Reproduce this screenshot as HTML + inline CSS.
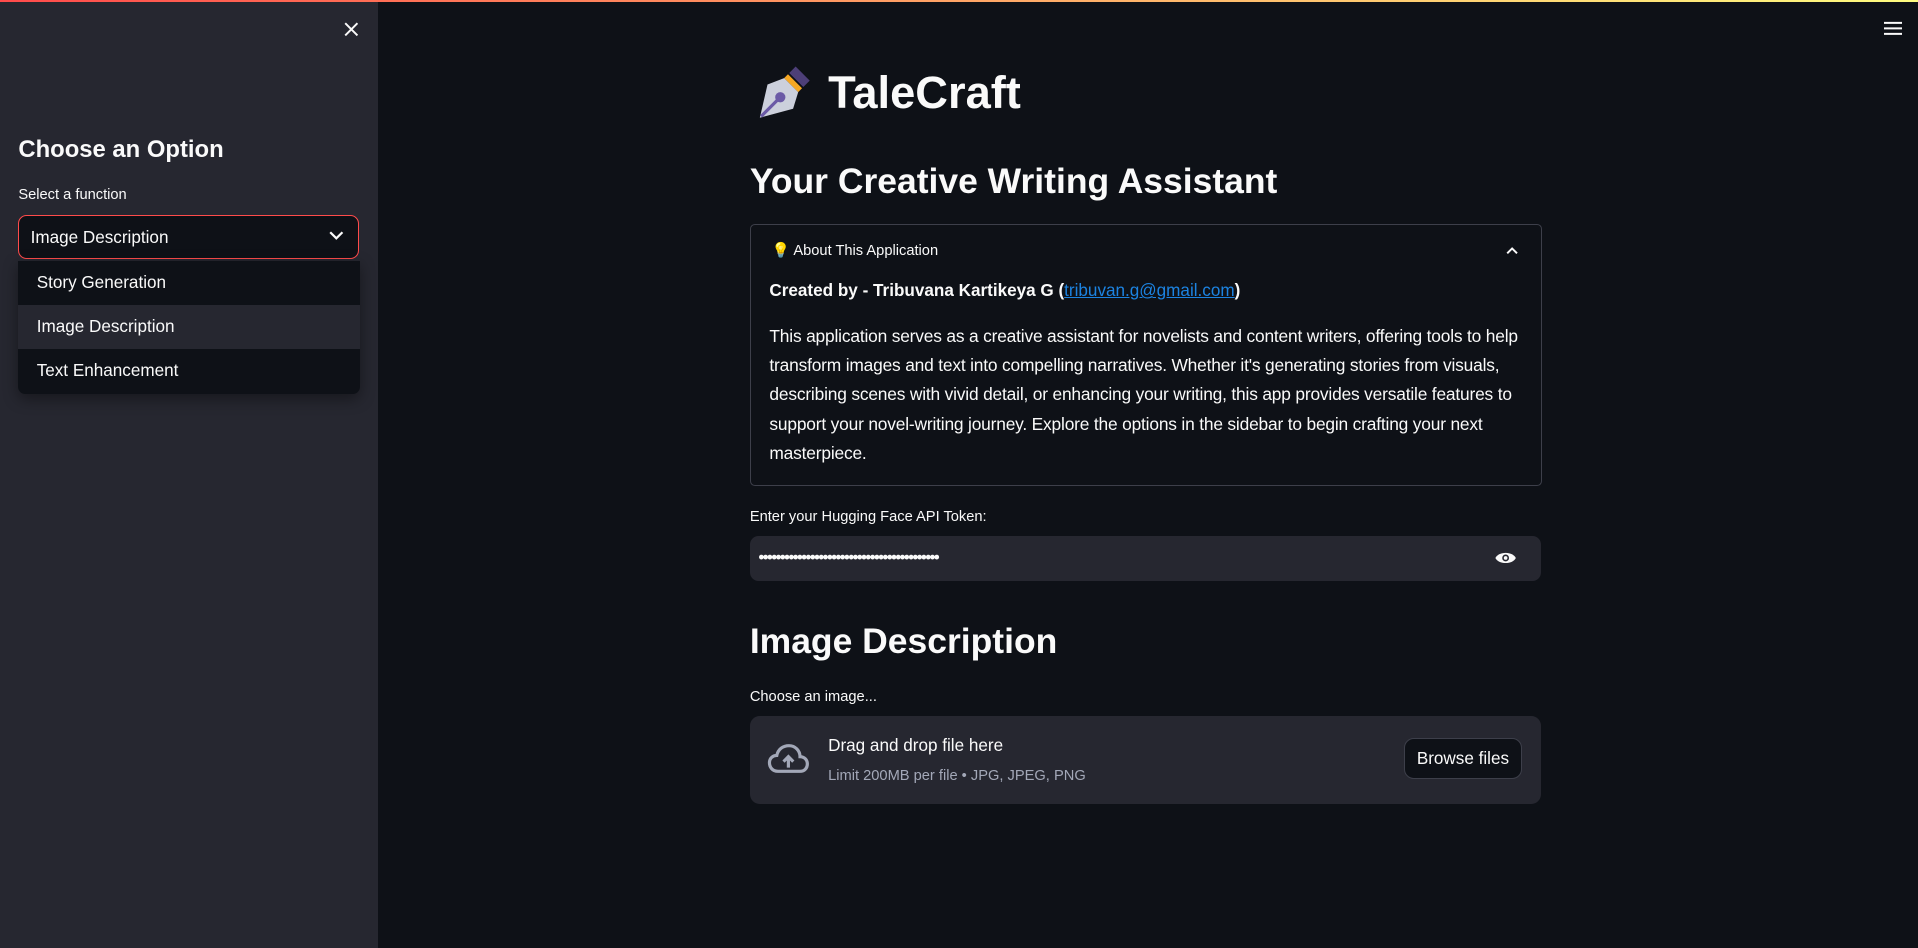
<!DOCTYPE html>
<html><head><meta charset="utf-8"><style>
html,body{margin:0;padding:0;background:#0e1117;overflow:hidden}
body{width:1918px;height:948px}
#root{zoom:1.2232;width:1568px;height:775px;position:relative;font-family:"Liberation Sans",sans-serif;color:#fafafa;background:#0e1117}
.abs{position:absolute}
.bar{left:0;top:0;width:1568px;height:2px;background:linear-gradient(90deg,#ff4b4b,#fffd80)}
.side{left:0;top:2px;width:309px;height:773px;background:#262730}
.t{white-space:nowrap}
</style></head><body><div id="root">
<div class="abs side"></div>
<div class="abs bar"></div>
<svg class="abs" style="left:281px;top:18px" width="12" height="12"><path d="M1 1L11 11M11 1L1 11" stroke="#fafafa" stroke-width="1.6"/></svg>
<div class="abs t" style="left:15px;top:111px;font-size:19.5px;font-weight:bold">Choose an Option</div>
<div class="abs t" style="left:15px;top:153px;font-size:12px">Select a function</div>
<div class="abs" style="left:15px;top:176px;width:277px;height:34px;border:1px solid #ff4b4b;border-radius:7px;background:#0e1117"></div>
<div class="abs t" style="left:25px;top:186px;font-size:14px">Image Description</div>
<svg class="abs" style="left:269px;top:189px" width="12" height="8"><path d="M1 1L6 6L11 1" stroke="#fafafa" stroke-width="1.8" fill="none"/></svg>
<div class="abs" style="left:15px;top:213px;width:279px;height:109px;background:#0e1117;border-radius:0 0 6px 6px;box-shadow:0 4px 12px rgba(0,0,0,.4)">
<div style="height:36px;line-height:36px;padding-left:15px;font-size:14px">Story Generation</div>
<div style="height:36px;line-height:36px;padding-left:15px;font-size:14px;background:#262730">Image Description</div>
<div style="height:36px;line-height:36px;padding-left:15px;font-size:14px">Text Enhancement</div>
</div>
<svg class="abs" style="left:1540px;top:17px" width="15" height="12"><path d="M0 1.5H15M0 6H15M0 10.5H15" stroke="#fafafa" stroke-width="1.6"/></svg>
<svg class="abs" style="left:618px;top:52px" width="46" height="46" viewBox="0 0 44 44"><path d="M31 2L42 13L37 18L26 7Z" fill="#4d3f78"/><path d="M25 8L36 19L33 22L22 11Z" fill="#f6a723"/><path d="M22 11L33 22L29 35L3 42L9 16Z" fill="#ccd0dc"/><path d="M4 41L17 28" stroke="#6b5aa6" stroke-width="2.5"/><circle cx="19" cy="26" r="4" fill="#6b5aa6"/></svg>
<div class="abs t" style="left:677px;top:55px;font-size:37px;font-weight:bold">TaleCraft</div>
<div class="abs t" style="left:613px;top:132px;font-size:29px;font-weight:bold">Your Creative Writing Assistant</div>
<div class="abs" style="left:613px;top:183px;width:646px;height:213px;border:1px solid #3d3f4a;border-radius:4px"></div>
<div class="abs t" style="left:631px;top:197px;font-size:12px">💡 About This Application</div>
<svg class="abs" style="left:1231px;top:201px" width="10" height="7"><path d="M1 6L5 2L9 6" stroke="#fafafa" stroke-width="1.6" fill="none"/></svg>
<div class="abs t" style="left:629px;top:230px;font-size:14px;font-weight:bold">Created by - Tribuvana Kartikeya G (<span style="color:#1c83e1;text-decoration:underline;font-weight:normal">tribuvan.g@gmail.com</span>)</div>
<div class="abs" style="left:629px;top:263px;width:625px;font-size:14.2px;letter-spacing:-0.15px;line-height:24px">This application serves as a creative assistant for novelists and content writers, offering tools to help transform images and text into compelling narratives. Whether it's generating stories from visuals, describing scenes with vivid detail, or enhancing your writing, this app provides versatile features to support your novel-writing journey. Explore the options in the sidebar to begin crafting your next masterpiece.</div>
<div class="abs t" style="left:613px;top:416px;font-size:12px">Enter your Hugging Face API Token:</div>
<div class="abs" style="left:613px;top:438px;width:647px;height:37px;background:#262730;border-radius:7px"></div>
<div class="abs t" style="left:620px;top:448px;font-size:14px;letter-spacing:-1.4px">••••••••••••••••••••••••••••••••••••••••••</div>
<svg class="abs" style="left:1221px;top:450px" width="19" height="13" viewBox="0 0 20 14"><path d="M1 7C4 1 16 1 19 7C16 13 4 13 1 7Z" fill="#fafafa"/><circle cx="10" cy="7" r="3" fill="#262730"/><circle cx="10" cy="7" r="1.6" fill="#fafafa"/></svg>
<div class="abs t" style="left:613px;top:508px;font-size:29px;font-weight:bold">Image Description</div>
<div class="abs t" style="left:613px;top:563px;font-size:12px">Choose an image...</div>
<div class="abs" style="left:613px;top:585px;width:647px;height:72px;background:#262730;border-radius:8px"></div>
<svg class="abs" style="left:627px;top:607px" width="35" height="27" viewBox="0 0 35 27"><path d="M9 24C4 24 2 20 2 17C2 13 5 11 8 11C9 6 13 3 18 3C23 3 27 7 27 12C31 12 33 15 33 18C33 21 31 24 27 24Z" fill="none" stroke="#a3a8b8" stroke-width="2.6"/><path d="M17.5 21V13M13.5 16L17.5 12L21.5 16" stroke="#a3a8b8" stroke-width="2.6" fill="none"/></svg>
<div class="abs t" style="left:677px;top:602px;font-size:14px">Drag and drop file here</div>
<div class="abs t" style="left:677px;top:628px;font-size:12px;color:#a3a8b8">Limit 200MB per file • JPG, JPEG, PNG</div>
<div class="abs t" style="left:1148px;top:603px;width:96px;height:34px;box-sizing:border-box;border:1px solid #3d3f4a;border-radius:8px;background:#0e1117;font-size:14px;text-align:center;line-height:32px">Browse files</div>
</div></body></html>
